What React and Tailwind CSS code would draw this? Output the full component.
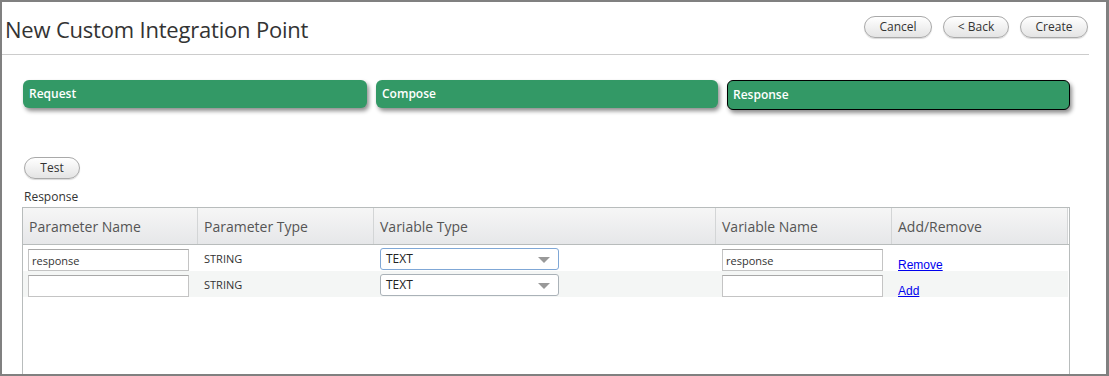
import { useState } from "react";

const headers = [
  "Parameter Name",
  "Parameter Type",
  "Variable Type",
  "Variable Name",
  "Add/Remove",
];

function PillButton({ label, className }) {
  return (
    <button
      className={`h-[22px] rounded-full border border-[#a9a9a9] bg-gradient-to-b from-white to-[#e4e4e4] text-[12px] text-[#333] shadow-[0_1px_1px_rgba(0,0,0,0.15)] ${className}`}
    >
      {label}
    </button>
  );
}

function SelectBox({ focused }) {
  return (
    <div
      className={`relative flex h-[22px] w-[179px] items-center rounded-[3px] border bg-white pl-[5px] text-[12px] text-[#222] ${
        focused ? "border-[#7fa7d6]" : "border-[#aab2b8]"
      }`}
    >
      TEXT
      <span className="absolute right-[8px] top-[8px] h-0 w-0 border-x-[6px] border-t-[6px] border-x-transparent border-t-[#999]" />
    </div>
  );
}

function TextBox({ value }) {
  return (
    <input
      readOnly
      value={value}
      className="block h-[22px] w-[161px] border border-[#c4c4c4] border-t-[#a8a8a8] bg-white px-[3px] text-[11px] text-[#333] outline-none"
    />
  );
}

export default function App() {
  const [rows] = useState([
    { name: "response", varName: "response", action: "Remove" },
    { name: "", varName: "", action: "Add" },
  ]);

  return (
    <div className="box-border h-[376px] overflow-hidden border-t-2 border-b-2 border-l-2 border-r-[3px] border-[#808080] bg-white font-['Open_Sans',sans-serif]">
      <div className="mr-[17px] flex h-[53px] items-start justify-between border-b border-[#cccccc] pl-[3px]">
        <h1 className="pt-[13px] text-[22px] leading-[28px] tracking-[-0.2px] text-[#333]">
          New Custom Integration Point
        </h1>
        <div className="flex gap-[11px] pt-[14px] pr-[1px]">
          <PillButton label="Cancel" className="w-[68px]" />
          <PillButton label="< Back" className="w-[66px]" />
          <PillButton label="Create" className="w-[68px]" />
        </div>
      </div>

      <div className="mt-[25px] ml-[21px] grid w-[1047px] grid-cols-[344px_342px_343px] items-start gap-[9px]">
        <div className="flex h-[28px] items-center rounded-[6px] bg-[#339966] pl-[6px] text-[12px] font-semibold text-white shadow-[2px_3px_4px_rgba(0,0,0,0.45)]">
          Request
        </div>
        <div className="flex h-[28px] items-center rounded-[6px] bg-[#339966] pl-[6px] text-[12px] font-semibold text-white shadow-[2px_3px_4px_rgba(0,0,0,0.45)]">
          Compose
        </div>
        <div className="flex h-[30px] items-center rounded-[6px] border border-black bg-[#339966] pl-[5px] text-[12px] font-semibold text-white shadow-[2px_3px_4px_rgba(0,0,0,0.45)]">
          Response
        </div>
      </div>

      <div className="mt-[44px] ml-[22px]">
        <PillButton label="Test" className="w-[56px]" />
      </div>

      <div className="mt-[10px] ml-[22px] text-[12px] leading-[16px] text-[#333]">
        Response
      </div>

      <div className="mt-[2px] ml-[20px] h-[170px] w-[1048px] border-x border-t border-[#b8bcbc]">
        <div className="grid grid-cols-[175px_176px_342px_176px_176px_1fr] border-b border-[#b8bcbc] bg-gradient-to-b from-[#f6f6f6] to-[#e6e7e9]">
          {headers.map((h) => (
            <div
              key={h}
              className="flex h-[36px] items-center border-r border-[#d3d5d6] pl-[6px] text-[14px] text-[#555]"
            >
              {h}
            </div>
          ))}
          <div className="h-[36px] bg-white" />
        </div>

        {rows.map((row, i) => (
          <div
            key={i}
            className={`grid h-[26px] grid-cols-[175px_176px_342px_176px_176px_1fr] items-start ${
              i % 2 ? "bg-[#f4f6f5]" : "bg-white"
            }`}
          >
            <div className="pl-[5px] pt-[4px]">
              <TextBox value={row.name} />
            </div>
            <div className="pl-[6px] pt-[7px] text-[11px] leading-[14px] text-[#333]">
              STRING
            </div>
            <div className="pl-[6px] pt-[3px]">
              <SelectBox focused={i === 0} />
            </div>
            <div className="pl-[6px] pt-[4px]">
              <TextBox value={row.varName} />
            </div>
            <div className="pl-[6px] pt-[11px] leading-[14px]">
              <a
                href="#"
                className="font-['Liberation_Sans',sans-serif] text-[12px] text-[#0000ee] underline"
              >
                {row.action}
              </a>
            </div>
            <div className="h-full bg-white" />
          </div>
        ))}
      </div>
    </div>
  );
}
